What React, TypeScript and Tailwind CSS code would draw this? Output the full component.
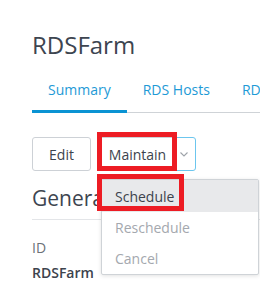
import React from "react";

const FONT = { fontFamily: '"Open Sans", "Noto Sans", sans-serif' };

export default function App() {
  return (
    <div
      className="w-[260px] h-[289px] overflow-hidden bg-white pt-[29px] pl-[32px] text-[#3c434d]"
      style={FONT}
    >
      {/* Title */}
      <h1 className="text-[24px] leading-[32px] font-normal text-[#3d4550] whitespace-nowrap">
        RDSFarm
      </h1>

      {/* Tabs */}
      <div className="mt-[9px] flex border-b border-[#cfd3d7] w-[400px]">
        <Tab label="Summary" active />
        <Tab label="RDS Hosts" />
        <Tab label="RDS Collections" />
      </div>

      {/* Actions */}
      <div className="mt-[24px] flex items-center">
        <button className="h-[34px] w-[59px] border border-[#cdd1d6] rounded-[3px] text-[14px] text-[#3c434d] bg-white">
          Edit
        </button>
        <div className="relative ml-[7px] flex">
          <button className="h-[34px] w-[79px] border border-[#cdd1d6] rounded-l-[3px] text-[14px] text-[#3c434d] bg-white">
            Maintain
          </button>
          <button className="-ml-px h-[34px] w-[20px] border border-[#6cc6ee] rounded-r-[3px] bg-white flex items-center justify-center pr-[4px]">
            <svg width="8" height="5" viewBox="0 0 8 5" fill="none">
              <path d="M0.5 0.5L4 4L7.5 0.5" stroke="#9ea3a9" strokeWidth="1.1" />
            </svg>
          </button>

          {/* Dropdown menu */}
          <div className="absolute left-[3px] top-[42px] w-[158px] bg-white border border-[#cfd3d7] rounded-[2px] shadow-[0_1px_4px_rgba(0,0,0,0.12)] z-10">
            <div className="h-[32px] pl-[13px] flex items-center bg-[#e8e9eb] text-[14px] text-[#3c434d]">
              Schedule
            </div>
            <div className="h-[31px] pl-[13px] flex items-center text-[14px] text-[#a4a8ae]">
              Reschedule
            </div>
            <div className="h-[31px] pl-[13px] flex items-center text-[14px] text-[#a4a8ae]">
              Cancel
            </div>
          </div>

          {/* Annotation boxes */}
          <div className="absolute left-[-1px] top-[-5px] w-[80px] h-[39px] border-[5px] border-[#ed1c24] z-20" />
          <div className="absolute left-[-1px] top-[37px] w-[87px] h-[37px] border-[5px] border-[#ed1c24] z-20" />
        </div>
      </div>

      {/* General */}
      <h2 className="mt-[13px] text-[21px] leading-[28px] font-normal text-[#3d4550] pb-[7px] border-b border-[#e3e5e8] whitespace-nowrap">
        General
      </h2>
      <div className="mt-[18px] text-[14px] leading-[20px] text-[#6b7178]">ID</div>
      <div className="mt-[5px] text-[14px] leading-[20px] font-semibold text-[#3c434d]">
        RDSFarm
      </div>
    </div>
  );
}

function Tab({ label, active }: { label: string; active?: boolean }) {
  return (
    <div
      className={`-mb-px px-[16px] pt-[10px] pb-[10px] text-[14px] leading-[20px] whitespace-nowrap text-[#1e9ad6] border-b-[3px] ${
        active ? "border-[#0a93d3]" : "border-transparent"
      }`}
    >
      {label}
    </div>
  );
}
